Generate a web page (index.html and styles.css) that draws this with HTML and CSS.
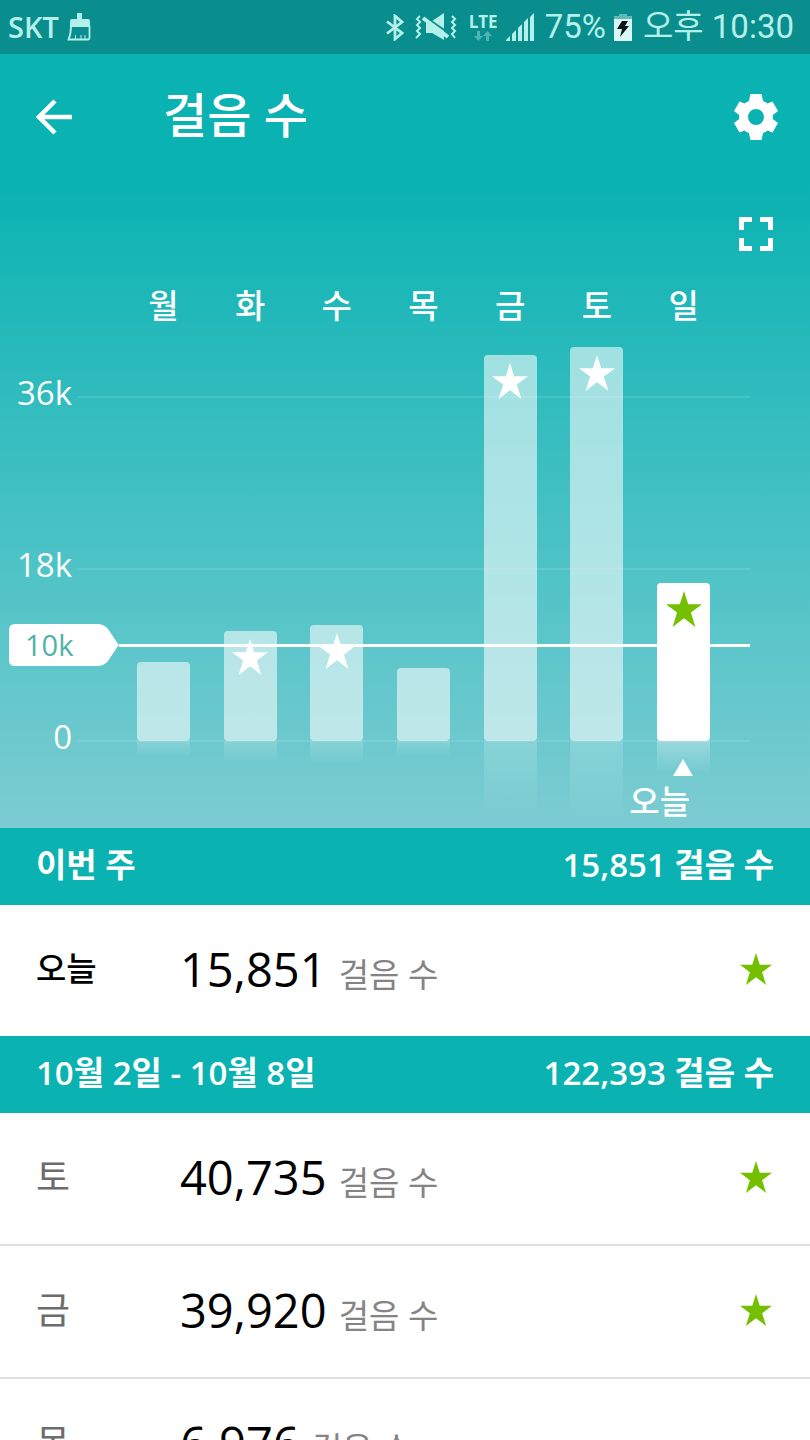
FILE: index.html
```html
<!DOCTYPE html>
<html lang="ko">
<head>
    <meta charset="UTF-8">
    <meta name="viewport" content="width=device-width, initial-scale=1.0">
    <title>걸음 수</title>
    <link rel="stylesheet" href="styles.css">
</head>
<body>
    <svg class="defs" width="0" height="0" aria-hidden="true">
        <symbol id="star" viewBox="0 0 36 36">
            <path d="M18 0L22.2 13.2H36L24.9 21.6L29.4 36L18 27.2L6.6 36L11.1 21.6L0 13.2H13.8Z"/>
        </symbol>
    </svg>

    <div class="app">
        <div class="status-bar">
            <div class="status-group">
                <span class="carrier">SKT</span>
                <svg width="24" height="28" viewBox="0 0 24 28" fill="currentColor">
                    <path d="M10 0h5v6h6q2 0 2 2v6H3V8q0-2 2-2h5z"/>
                    <path d="M4 13Q4 21 1.500 26.500H21Q22.500 26.500 22.500 25V13" fill="none" stroke="currentColor" stroke-width="1.800"/>
                    <path d="M8.500 26v-4M14 26v-4M18 26v-4" stroke="currentColor"/>
                </svg>
            </div>
            <div class="status-group">
                <svg width="18" height="27" viewBox="0 0 18 27" fill="none" stroke="currentColor" stroke-width="2.800">
                    <path d="M1 7.500L16 19L9 25V2L16 8L1 19.500"/>
                </svg>
                <svg class="mute" width="42" height="28" viewBox="0 0 42 28">
                    <path d="M5 3L2 6l3 3-3 3 3 3-3 3 3 3-4 4M37 3l3 3-3 3 3 3-3 3 3 3-3 3 3 4" fill="none" stroke="currentColor" stroke-width="2"/>
                    <path d="M11 8h6l12-8v27L17 20h-6z" fill="currentColor"/>
                    <path d="M9 3L35 21" stroke="#0a8e8d" stroke-width="2"/>
                    <path d="M8 5L33 24" stroke="currentColor" stroke-width="4"/>
                </svg>
                <div class="network">
                    <span>LTE</span>
                    <svg width="18" height="10" viewBox="0 0 18 10" fill="currentColor">
                        <path d="M3 0h3v5h3L4.500 10 0 5h3zM12 10h3V5h3L13.500 0 9 5h3z"/>
                    </svg>
                </div>
                <svg class="signal" width="28" height="28" viewBox="0 0 28 28" fill="currentColor">
                    <path d="M0 28v-1l4-4v5zM6 28v-7l4-4v11zM12 28V15l4-4v17zM18 28V9l4-4v23zM24 28V4l4-4v28z"/>
                </svg>
                <span class="status-text">75%</span>
                <svg class="battery" width="19" height="27" viewBox="0 0 19 27">
                    <path d="M5 0h8v2h5v5H0V2h5z" fill="#5fb9b5"/>
                    <path d="M0 5h18v22H0z" fill="#d9f7f4"/>
                    <path d="M8 7h6l-3 5h4L6 23l2-8H3z" fill="#0b1514"/>
                </svg>
                <span class="status-text">오후 10:30</span>
            </div>
        </div>

        <div class="hero">
            <header class="app-bar">
                <button class="icon-btn" type="button" aria-label="뒤로">
                    <svg width="36" height="36" viewBox="0 0 36 36" fill="none" stroke="currentColor" stroke-width="4.500">
                        <path d="M19 2L3 18L19 34M3 18H36"/>
                    </svg>
                </button>
                <h1>걸음 수</h1>
                <button class="icon-btn" type="button" aria-label="설정">
                    <svg width="44" height="46" viewBox="0 0 44 46" fill="currentColor">
                        <path fill-rule="evenodd" d="M16.500 0h11l1.600 7q2.600 1 4.500 2.600L38.500 7.500 44 17l-5.200 4v4L44 29l-5.500 9.500-4.900-2.100Q31.700 38 29.100 39l-1.600 7h-11l-1.600-7q-2.600-1-4.500-2.600L5.500 38.500 0 29l5.200-4v-4L0 17l5.500-9.500 4.900 2.100Q12.300 8 14.900 7zM22 15a8 8 0 1 0 0 16 8 8 0 0 0 0-16z"/>
                    </svg>
                </button>
            </header>

            <div class="chart">
                <div class="chart-tools">
                    <button class="icon-btn" type="button" aria-label="전체 화면">
                        <svg width="34" height="34" viewBox="0 0 34 34" fill="none" stroke="currentColor" stroke-width="5">
                            <path d="M2.500 13V2.500H13M21 2.500H31.500V13M31.500 21V31.500H21M13 31.500H2.500V21"/>
                        </svg>
                    </button>
                </div>

                <div class="days">
                    <span>월</span>
                    <span>화</span>
                    <span>수</span>
                    <span>목</span>
                    <span>금</span>
                    <span>토</span>
                    <span>일</span>
                </div>

                <div class="plot">
                    <div class="scale">
                        <div class="scale-row"><span>36k</span></div>
                        <div class="scale-row"><span>18k</span></div>
                        <div class="scale-row"><span>0</span></div>
                    </div>

                    <div class="bars">
                        <div class="bar" style="height: 79px"></div>
                        <div class="bar" style="height: 110px"><svg class="star"><use href="#star"/></svg></div>
                        <div class="bar" style="height: 116px"><svg class="star"><use href="#star"/></svg></div>
                        <div class="bar" style="height: 73px"></div>
                        <div class="bar" style="height: 386px"><svg class="star"><use href="#star"/></svg></div>
                        <div class="bar" style="height: 394px"><svg class="star"><use href="#star"/></svg></div>
                        <div class="bar today" style="height: 158px"><svg class="star"><use href="#star"/></svg></div>
                    </div>

                    <div class="goal">
                        <div class="goal-tag">
                            <svg width="110" height="42" viewBox="0 0 110 42" fill="#fff">
                                <path d="M6 0H88Q95 0 99 5L107 17Q109 20 110 21Q109 22 107 25L99 37Q95 42 88 42H6Q0 42 0 36V6Q0 0 6 0Z"/>
                            </svg>
                            <span>10k</span>
                        </div>
                    </div>
                </div>

                <div class="today-mark">
                    <svg width="20" height="17" viewBox="0 0 20 17" fill="currentColor">
                        <path d="M10 0L20 17H0Z"/>
                    </svg>
                    <span>오늘</span>
                </div>
            </div>
        </div>

        <main class="history">
            <section>
                <h2 class="week"><span>이번 주</span><span>15,851 걸음 수</span></h2>
                <ul class="day-list">
                    <li class="day-row current">
                        <span class="day">오늘</span>
                        <span class="count">15,851 <small>걸음 수</small></span>
                        <svg class="star"><use href="#star"/></svg>
                    </li>
                </ul>
            </section>
            <section>
                <h2 class="week"><span>10월 2일 - 10월 8일</span><span>122,393 걸음 수</span></h2>
                <ul class="day-list">
                    <li class="day-row">
                        <span class="day">토</span>
                        <span class="count">40,735 <small>걸음 수</small></span>
                        <svg class="star"><use href="#star"/></svg>
                    </li>
                    <li class="day-row">
                        <span class="day">금</span>
                        <span class="count">39,920 <small>걸음 수</small></span>
                        <svg class="star"><use href="#star"/></svg>
                    </li>
                    <li class="day-row">
                        <span class="day">목</span>
                        <span class="count">6,976 <small>걸음 수</small></span>
                    </li>
                </ul>
            </section>
        </main>
    </div>
</body>
</html>
```
FILE: styles.css
```css
* {
    box-sizing: border-box;
}

body {
    margin: 0;
    font-family: 'Open Sans', 'Noto Sans CJK KR', sans-serif;
    color: #000;
    background: #fff;
}

svg {
    display: block;
    flex: none;
}

.defs {
    position: absolute;
}

.app {
    display: flex;
    flex-direction: column;
    height: 100vh;
    overflow: hidden;
}

/* status bar */
.status-bar {
    display: flex;
    justify-content: space-between;
    align-items: center;
    flex: none;
    height: 54px;
    padding: 0 16px 0 8px;
    background: #0a8e8d;
    color: #b4f0ea;
}

.status-group {
    display: flex;
    align-items: center;
    gap: 8px;
}

.carrier {
    font-size: 29px;
    font-weight: 600;
    line-height: 40px;
}

.status-text {
    font-family: Roboto, 'Noto Sans CJK KR', sans-serif;
    font-size: 33px;
    font-weight: 400;
    line-height: 40px;
}

.mute {
    margin: 0 4px 0 3px;
}

.signal {
    margin-right: 3px;
}

.battery {
    margin-right: 2px;
}

.network {
    display: flex;
    flex-direction: column;
    align-items: center;
    font-size: 17px;
    font-weight: 700;
    line-height: 18px;
}

.network svg {
    color: #4fb3af;
}

/* header and chart */
.hero {
    flex: none;
    color: #fff;
    background: linear-gradient(#0ab2b2 0, #0ab2b2 126px, #4dc3c6 506px, #7cccd2 100%);
}

.app-bar {
    display: flex;
    align-items: center;
    height: 126px;
    padding: 0 32px 0 36px;
}

.app-bar h1 {
    flex: 1;
    margin: 0 0 0 91px;
    padding-bottom: 4px;
    font-size: 48px;
    font-weight: 500;
    line-height: 60px;
}

.icon-btn {
    padding: 0;
    border: none;
    background: none;
    color: inherit;
    cursor: pointer;
}

.chart-tools {
    display: flex;
    justify-content: flex-end;
    padding: 37px 37px 0 0;
}

.days,
.bars {
    display: grid;
    grid-template-columns: repeat(7, 1fr);
    justify-items: center;
    padding: 0 83px 0 120px;
}

.days {
    margin: 35px 0 21px;
    font-size: 33px;
    font-weight: 500;
    line-height: 40px;
}

.plot {
    position: relative;
}

.bars {
    position: relative;
    align-items: end;
    height: 394px;
}

.bar {
    position: relative;
    display: flex;
    justify-content: center;
    width: 53px;
    padding-top: 8px;
    border-radius: 4px;
    background: rgba(255, 255, 255, 0.56);
}

.bar::after {
    content: "";
    position: absolute;
    top: 100%;
    left: 0;
    width: 100%;
    height: 20%;
    background: linear-gradient(rgba(255, 255, 255, 0.18), rgba(255, 255, 255, 0));
}

.bar.today {
    z-index: 1;
    background: #fff;
}

.bar.today::after {
    background: linear-gradient(rgba(255, 255, 255, 0.3), rgba(255, 255, 255, 0));
}

.star {
    width: 36px;
    height: 36px;
    fill: #fff;
}

.today .star,
.day-row .star {
    fill: #73bf00;
}

/* grid lines sit behind the bars */
.scale {
    position: absolute;
    right: 60px;
    bottom: -20px;
    left: 0;
    display: flex;
    flex-direction: column;
    gap: 132px;
}

.scale-row {
    display: flex;
    align-items: center;
    gap: 5px;
    height: 40px;
    font-size: 33px;
    line-height: 40px;
}

.scale-row span {
    width: 72px;
    padding-bottom: 8px;
    text-align: right;
}

.scale-row::after {
    content: "";
    flex: 1;
    height: 2px;
    background: rgba(255, 255, 255, 0.1);
}

.goal {
    position: absolute;
    right: 60px;
    bottom: 75px;
    left: 9px;
    display: flex;
    align-items: center;
}

.goal::after {
    content: "";
    flex: 1;
    height: 3px;
    background: #fff;
}

.goal-tag {
    display: grid;
    align-items: center;
    color: #4db3a8;
    font-size: 29px;
    line-height: 40px;
}

.goal-tag > * {
    grid-area: 1 / 1;
}

.goal-tag span {
    padding-left: 16px;
}

.today-mark {
    position: relative;
    display: flex;
    flex-direction: column;
    align-items: flex-end;
    gap: 10px;
    padding: 18px 117px 10px 0;
    font-size: 33px;
    font-weight: 500;
    line-height: 32px;
}

.today-mark span {
    padding-right: 3px;
}

/* history list */
.history {
    flex: 1;
    min-height: 0;
    overflow-y: auto;
    scrollbar-width: none;
}

.week {
    display: flex;
    justify-content: space-between;
    align-items: center;
    height: 77px;
    margin: 0;
    padding: 0 36px 4px;
    background: #0ab2b2;
    color: #fff;
    font-size: 33px;
    font-weight: 600;
    line-height: 40px;
}

.day-list {
    margin: 0;
    padding: 0;
    list-style: none;
}

.day-row {
    display: grid;
    grid-template-columns: 144px 1fr auto;
    align-items: center;
    height: 131px;
    padding: 0 38px 4px 36px;
    line-height: 60px;
}

.day-row + .day-row {
    height: 133px;
    border-top: 2px solid #e0e0e0;
}

.day {
    color: #6c6c6c;
    font-size: 37px;
}

.current .day {
    color: #000;
    font-size: 33px;
    font-weight: 500;
}

.count {
    font-size: 47px;
}

.count small {
    color: #848484;
    font-size: 33px;
    line-height: 40px;
}

.day-row .star {
    width: 32px;
    height: 32px;
}
```
